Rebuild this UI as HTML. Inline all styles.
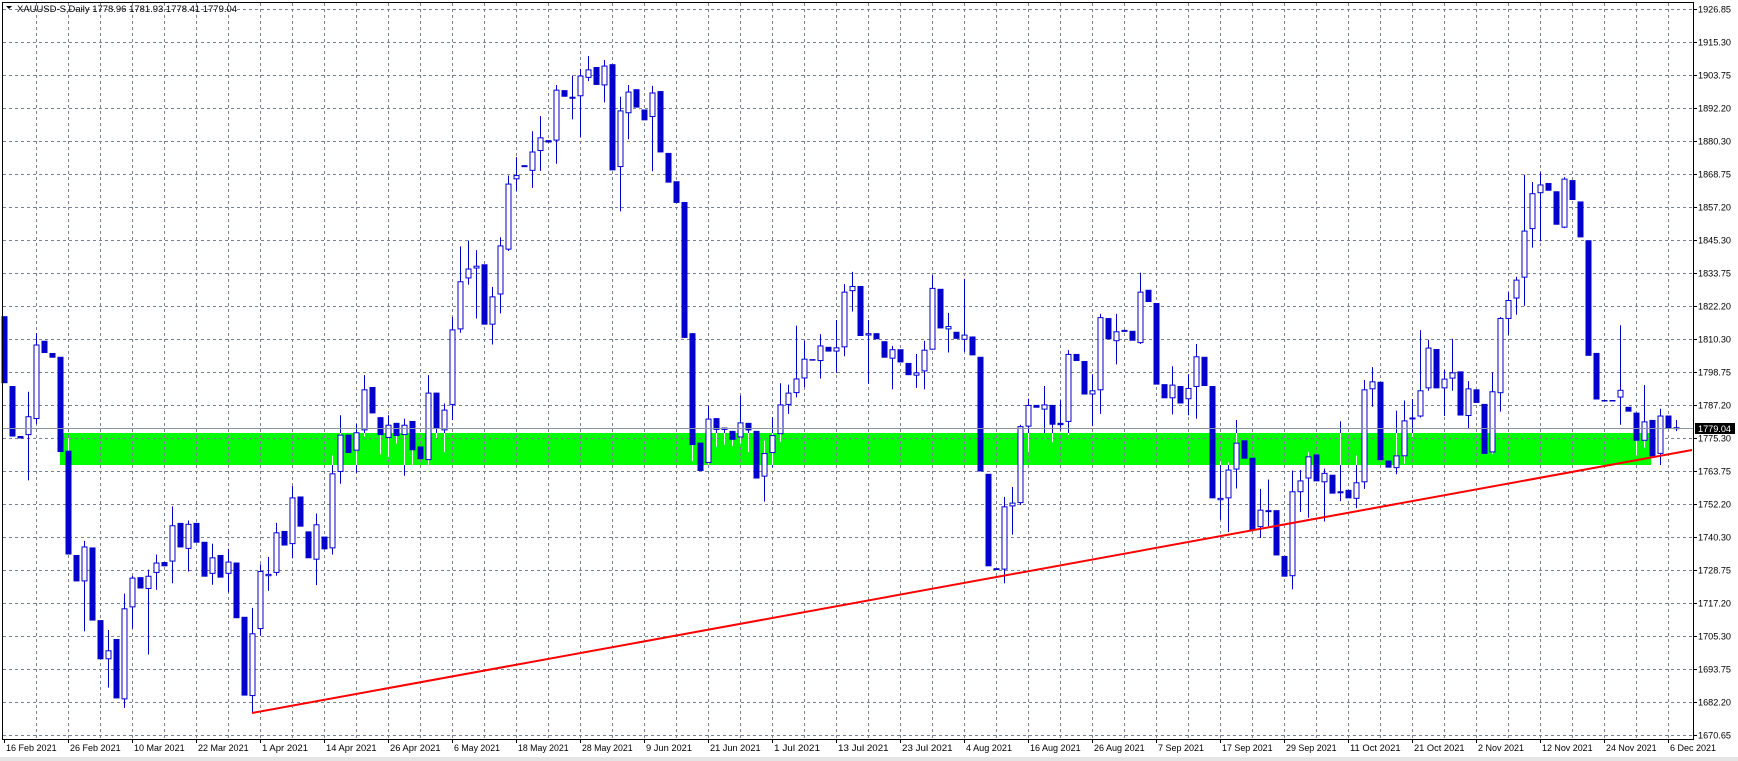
<!DOCTYPE html>
<html><head><meta charset="utf-8"><style>
html,body{margin:0;padding:0;background:#fff;width:1738px;height:761px;overflow:hidden}
svg{display:block}
text{font-family:"Liberation Sans",sans-serif;}
</style></head><body>
<svg id="s" width="1738" height="761" xmlns="http://www.w3.org/2000/svg">
<rect x="0" y="0" width="1738" height="761" fill="#fff"/>
<rect x="0" y="757" width="1738" height="4" fill="#e4e4e4"/>
<g id="g"></g>
</svg>
<script>
var NS="http://www.w3.org/2000/svg",G=document.getElementById('g');
function el(n,a,t){var e=document.createElementNS(NS,n);for(var k in a)e.setAttribute(k,a[k]);if(t!=null)e.textContent=t;G.appendChild(e);return e;}
// green zone
el('rect',{x:60,y:433,width:1591,height:32,fill:'#00ff00'});
// grid
for(var k=0;k<23;k++){var y=9+33*k+0.5;el('line',{x1:3,y1:y,x2:1693,y2:y,stroke:'#778190','stroke-width':1,'stroke-dasharray':'3,3'});}
for(var i=4;i<212;i+=4){var x=4+8*i+0.5;if(x>1692)break;el('line',{x1:x,y1:3,x2:x,y2:739,stroke:'#778190','stroke-width':1,'stroke-dasharray':'3,3'});}
// candles data: bull,top,bot,wt,wb (zoom units)
var D=[
"0,670,812","0,818,925","0,924,929","1,882,922,830,1018","1,730,888,706,898","0,722,748","0,748,758","0,756,958","0,955,1175,928,1175","0,1176,1232",
"1,1158,1232,1146,1338","0,1160,1315","0,1314,1397","1,1378,1397,1335,1457","0,1354,1480","1,1289,1482,1258,1500","1,1224,1287,1220,1332","0,1223,1247","1,1220,1248,1207,1387","1,1192,1214,1175,1250",
"0,1191,1200","1,1113,1190,1073,1236","0,1108,1160","1,1110,1163,1103,1211","0,1108,1150","0,1148,1222","1,1181,1216,1152,1239","0,1176,1224","1,1190,1216,1163,1255","0,1192,1310",
"0,1307,1474","1,1342,1475,1288,1512","1,1210,1333,1196,1347","1,1216,1221,1180,1252","1,1128,1214,1108,1220",
"0,1125,1156","1,1054,1153,1030,1183","0,1052,1116","0,1126,1183","1,1111,1186,1088,1240","0,1137,1164","1,1003,1162,965,1175","1,921,1000,880,1025","0,921,960","1,916,955,898,1002",
"1,825,912,795,925","0,820,876","0,884,922,884,963","1,900,928,880,968","0,896,924,896,940","1,900,922,887,1008","0,892,954,892,985","0,946,973","1,832,975,795,985","0,832,908,832,928",
"1,868,912,855,958","1,698,858,672,890","1,596,698,522,705","1,569,590,510,603","1,563,569,530,675","0,560,688","1,628,688,608,730","1,520,624,503,664","1,389,529,372,532","1,371,380,333,405",
"1,350,353","1,321,362,278,398","1,291,320,246,362","0,297,302","1,190,298,180,347",
"0,191,205","1,205,207,160,253","1,160,204,146,290","1,147,165,119,172","0,142,180","1,139,181,127,217","0,136,361","1,234,354,205,448","1,194,240,180,295","0,189,228",
"0,232,255","1,196,248,182,363","0,193,323","0,324,387","0,384,430","0,428,716","0,706,943,706,977","0,938,998","1,887,981,860,985","0,886,911,886,947",
"0,906,911,906,942","0,913,932,913,945","1,895,927,838,940","0,896,912,896,958","0,913,1014","1,960,1010,934,1063","1,922,960,884,990","1,857,920,812,936","1,832,858,815,877","1,802,833,690,842",
"1,760,802,722,820","0,761,764","1,732,765,708,802","0,735,745","1,736,745,678,790",
"1,618,736,602,755","1,606,617,576,660","0,606,712","1,706,711,678,813","0,706,719","0,723,758","1,740,760,733,825","0,740,768","0,769,795","1,789,796,750,822",
"1,741,787,722,825","1,610,741,583,741","0,612,696","1,691,698,663,747","0,703,718","1,709,720,591,745","0,713,753","0,756,999","0,1004,1200","0,1204,1208",
"1,1073,1207,1053,1236","1,1065,1073,1032,1133","1,903,1066,900,1070","1,858,904,845,958","0,858,864","1,857,868,818,918","0,858,900,858,937","0,896,901,848,912","1,750,894,742,922","0,750,765",
"0,765,836","1,827,836,793,903","1,672,827,665,877","0,674,719","1,702,723,665,772",
"1,699,702","0,701,722","1,618,727,578,729","0,614,640","0,642,815","0,814,844","1,815,844,776,878","0,818,855","1,822,846,793,880","1,755,820,729,887",
"0,756,818","0,818,1056","1,1055,1060,977,1101","1,995,1056,980,1127","1,938,995,890,1035","0,933,972","0,970,1123","1,1080,1117,1036,1140","1,1081,1084,1016,1115","0,1081,1177",
"0,1178,1222","1,1041,1221,997,1249","1,1018,1043,996,1085","1,967,1014,958,1097","0,963,1020","1,1002,1022,993,1105","0,1006,1046","1,1041,1045,893,1062","0,1038,1056","1,1022,1057,965,1077",
"1,825,1022,805,1036","1,808,825,778,862","0,809,975","0,976,991","1,965,992,870,1005",
"1,866,940,825,955","1,860,864,822,900","1,804,858,680,860","1,716,800,700,805","0,719,800","1,780,800,762,857","1,767,780,698,805","0,765,856","1,800,857,785,884","0,802,830",
"0,832,935","1,806,932,767,935","1,655,810,653,848","1,618,657,602,690","1,576,615,570,648","1,475,572,360,630","1,398,472,375,510","1,380,398,355,497","0,377,393","0,394,463",
"1,368,469,365,470","0,371,412","0,415,489","0,495,733","0,727,823","0,824,826","0,824,826","1,803,819,670,875","0,838,848","0,850,908,850,938",
"1,868,908,793,922","0,865,940","1,856,935,842,958","0,856,882","1,880,884,865,888"
];
var B='#0000cc';
var bodies=[];
for(var i=0;i<D.length;i++){
 var p=D[i].split(',').map(Number);var f=i>=175?2.06:2.119;
 var bull=p[0],t=p[1]/f,b=p[2]/f,wt=(p.length>3?p[3]:p[1])/f,wb=(p.length>3?p[4]:p[2])/f;
 var cx=4+8*i+0.5;
 if(wt<t-0.5||wb>b+0.5){
  el('line',{x1:cx,y1:wt,x2:cx,y2:wb,stroke:B,'stroke-width':1});
  if(i*8+4>=60&&i*8+4<=1651){var a=Math.max(wt,433),c=Math.min(wb,465);if(c>a)el('line',{x1:cx,y1:a,x2:cx,y2:c,stroke:'#fff','stroke-width':1});}
 }
 bodies.push([bull,cx,t,b]);
}
for(var j=0;j<bodies.length;j++){var q=bodies[j];var h=Math.max(q[3]-q[2],1.5);
 if(q[0]) el('rect',{x:q[1]-2.5,y:q[2]+0.5,width:5,height:Math.max(h-1,1),fill:'#fff',stroke:B,'stroke-width':1});
 else el('rect',{x:q[1]-3,y:q[2],width:6,height:h,fill:B});
}
// red trendline
el('line',{x1:252,y1:713,x2:1692,y2:450,stroke:'#ff0000','stroke-width':2});
// current price line
el('line',{x1:3,y1:428.5,x2:1693,y2:428.5,stroke:'#8a96a6','stroke-width':1});
// borders
el('line',{x1:2.5,y1:2,x2:2.5,y2:740,stroke:'#000','stroke-width':1});
el('line',{x1:2,y1:2.5,x2:1693,y2:2.5,stroke:'#000','stroke-width':1});
el('line',{x1:2,y1:739.5,x2:1693,y2:739.5,stroke:'#000','stroke-width':1});
el('line',{x1:1693.5,y1:2,x2:1693.5,y2:740,stroke:'#000','stroke-width':1});
// price labels
var L=["1926.85","1915.30","1903.75","1892.20","1880.30","1868.75","1857.20","1845.30","1833.75","1822.20","1810.30","1798.75","1787.20","1775.30","1763.75","1752.20","1740.30","1728.75","1717.20","1705.30","1693.75","1682.20","1670.65"];
for(var k=0;k<L.length;k++){var y=9+33*k;el('line',{x1:1693,y1:y+0.5,x2:1697,y2:y+0.5,stroke:'#000'});
 el('text',{x:1698,y:y+3.5,'font-size':'9.5',fill:'#000',textLength:33,lengthAdjust:'spacingAndGlyphs'},L[k]);}
el('rect',{x:1695,y:423,width:40,height:11,fill:'#000'});
el('text',{x:1698,y:432,'font-size':'9.5',fill:'#fff',textLength:33,lengthAdjust:'spacingAndGlyphs'},'1779.04');
// dates
var DT=["16 Feb 2021","26 Feb 2021","10 Mar 2021","22 Mar 2021","1 Apr 2021","14 Apr 2021","26 Apr 2021","6 May 2021","18 May 2021","28 May 2021","9 Jun 2021","21 Jun 2021","1 Jul 2021","13 Jul 2021","23 Jul 2021","4 Aug 2021","16 Aug 2021","26 Aug 2021","7 Sep 2021","17 Sep 2021","29 Sep 2021","11 Oct 2021","21 Oct 2021","2 Nov 2021","12 Nov 2021","24 Nov 2021","6 Dec 2021"];
for(var k=0;k<DT.length;k++){var x=4+64*k;el('line',{x1:x+0.5,y1:739,x2:x+0.5,y2:743,stroke:'#000'});
 var w=DT[k].length*4.6;
 el('text',{x:x+2,y:751,'font-size':'9.5',fill:'#000',textLength:w.toFixed(1),lengthAdjust:'spacingAndGlyphs'},DT[k]);}
// header
el('path',{d:'M6 6 L12 6 L9 9 Z',fill:'#000'});
el('text',{x:17,y:12,'font-size':'9.5',fill:'#000',textLength:220,lengthAdjust:'spacingAndGlyphs'},'XAUUSD-S,Daily  1778.96 1781.93 1778.41 1779.04');
</script>
</body></html>
